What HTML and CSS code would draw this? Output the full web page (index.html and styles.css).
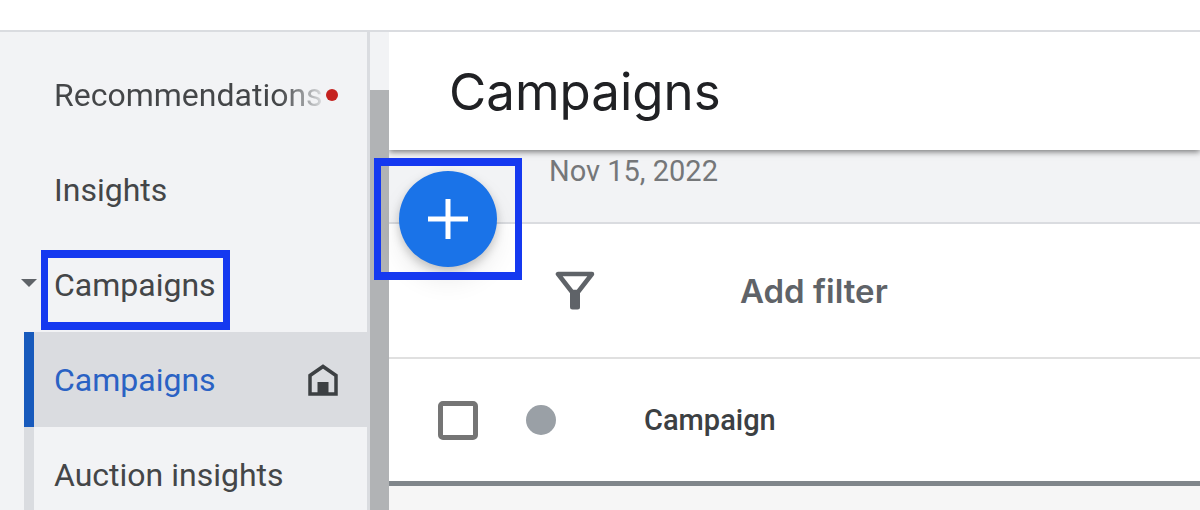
FILE: index.html
```
<!DOCTYPE html>
<html lang="en">
<head>
<meta charset="utf-8">
<title>Campaigns</title>
<link rel="stylesheet" href="styles.css">
</head>
<body>
<div class="topbar"></div>
<div class="layout">
  <nav class="sidebar" aria-label="Sections">
    <a class="item" href="#recommendations"><span class="fade">Recommendations</span><span class="alert"></span></a>
    <a class="item" href="#insights">Insights</a>
    <a class="item group" href="#campaigns-group">
      <svg class="caret" viewBox="0 0 16 8" aria-hidden="true"><path d="M0 0h16L8 8z"/></svg>
      Campaigns
      <span class="callout callout-nav"></span>
    </a>
    <a class="item sub active" href="#campaigns">Campaigns
      <svg class="home" viewBox="0 0 30 32" aria-hidden="true"><path d="M2 30V11.500L15 2.500L28 11.500V30z" fill="none" stroke="currentColor" stroke-width="3.500"/><path d="M9.500 18h11v13h-11z" fill="currentColor"/></svg>
    </a>
    <a class="item sub" href="#auction">Auction insights</a>
  </nav>
  <div class="scroll"><div class="thumb"></div></div>
  <main class="main">
    <header class="header"><h1 class="title">Campaigns</h1></header>
    <div class="dates">Nov 15, 2022</div>
    <div class="filters">
      <svg class="funnel" viewBox="0 0 40 40" aria-hidden="true"><path d="M3 3H37L23 21H17z" fill="none" stroke="currentColor" stroke-width="4.500" stroke-linejoin="round"/><path d="M15 19h10v17a2.500 2.500 0 0 1-2.500 2.500h-5A2.500 2.500 0 0 1 15 36z" fill="currentColor"/></svg>
      <button class="add-filter" type="button">Add filter</button>
    </div>
    <table class="table">
      <thead>
        <tr>
          <th class="check-cell"><input class="check" type="checkbox" aria-label="Select all campaigns"></th>
          <th class="dot-cell"><span class="dot"></span></th>
          <th class="name-cell" scope="col">Campaign</th>
        </tr>
      </thead>
    </table>
    <button class="fab" type="button" aria-label="New campaign">
      <svg class="plus" viewBox="0 0 40 40" aria-hidden="true"><path d="M20 0v40M0 20h40" stroke="currentColor" stroke-width="5"/></svg>
    </button>
    <span class="callout callout-fab"></span>
  </main>
</div>
</body>
</html>
```
FILE: styles.css
```
* {
  box-sizing: border-box;
}
body {
  margin: 0;
  height: 100vh;
  overflow: hidden;
  display: flex;
  flex-direction: column;
  background: #fff;
  color: #444648;
  font-family: Roboto, sans-serif;
}
.topbar {
  flex: none;
  height: 32px;
  border-bottom: 2px solid #dadce0;
}
.layout {
  flex: 1;
  min-height: 0;
  display: flex;
}
.sidebar {
  flex: none;
  width: 370px;
  padding-top: 15px;
  background: #f2f3f5;
  border-right: 3px solid #dadce0;
}
.item {
  position: relative;
  display: flex;
  align-items: center;
  height: 95px;
  padding-left: 54px;
  font-size: 32px;
  color: inherit;
  text-decoration: none;
}
.fade {
  background: linear-gradient(90deg, #444648 84%, #dcdee0 100%);
  background-clip: text;
  -webkit-background-clip: text;
  color: transparent;
}
.alert {
  position: absolute;
  right: 29px;
  width: 12px;
  height: 12px;
  border-radius: 50%;
  background: #c5221f;
}
.caret {
  position: absolute;
  left: 21px;
  top: 42px;
  width: 16px;
  height: 8px;
  fill: #5f6368;
}
.sub {
  margin-left: 24px;
  padding-left: 20px;
  border-left: 10px solid #dadce0;
}
.active {
  justify-content: space-between;
  padding-right: 29px;
  border-left-color: #185abc;
  background: #dadce0;
  color: #2a62c4;
}
.home {
  width: 30px;
  height: 32px;
  color: #3c4043;
}
.scroll {
  flex: none;
  width: 19px;
  padding-top: 58px;
  background: #f2f3f5;
}
.thumb {
  height: 100%;
  background: #b1b3b5;
}
.main {
  position: relative;
  flex: 1;
  min-width: 0;
  background: #f6f6f6;
}
.header {
  position: relative;
  display: flex;
  align-items: center;
  height: 118px;
  padding-left: 60px;
  background: #fff;
  box-shadow: 0 2px 6px rgba(0, 0, 0, 0.5);
  clip-path: inset(0 0 -12px 0);
}
.title {
  margin: 0;
  font-family: Inter, sans-serif;
  font-size: 51px;
  font-weight: 400;
  color: #202124;
}
.dates {
  height: 74px;
  padding: 4px 0 0 160px;
  border-bottom: 2px solid #dadce0;
  background: #f2f3f5;
  color: #757779;
  font-size: 29px;
  line-height: 34px;
}
.filters {
  display: flex;
  align-items: center;
  gap: 145px;
  height: 135px;
  padding-left: 166px;
  border-bottom: 2px solid #e0e0e0;
  background: #fff;
  color: #5f6368;
}
.funnel {
  width: 40px;
  height: 40px;
}
.add-filter {
  padding: 0;
  border: 0;
  background: none;
  color: inherit;
  font-family: Inter, sans-serif;
  font-size: 33px;
  font-weight: 600;
}
.table {
  width: 100%;
  border-collapse: separate;
  border-spacing: 0;
  table-layout: fixed;
  background: #fff;
  border-bottom: 5px solid #80868b;
}
.table th {
  height: 122px;
  padding: 0;
  text-align: left;
  vertical-align: middle;
}
.check-cell {
  width: 137px;
}
.dot-cell {
  width: 118px;
}
.table .check-cell {
  padding-left: 49px;
}
.check {
  display: block;
  width: 40px;
  height: 39px;
  margin: 0;
  appearance: none;
  border: 5px solid #757575;
  border-radius: 5px;
}
.dot {
  display: block;
  width: 30px;
  height: 30px;
  border-radius: 50%;
  background: #9aa0a6;
}
.name-cell {
  font-size: 29px;
  font-weight: 500;
  color: #3c4043;
}
.fab {
  position: absolute;
  left: 10px;
  top: 139px;
  display: flex;
  align-items: center;
  justify-content: center;
  width: 98px;
  height: 96px;
  padding: 0;
  border: 0;
  border-radius: 50%;
  background: #1a73e8;
  color: #fff;
  box-shadow: 0 4px 10px rgba(0, 0, 0, 0.2), 0 14px 26px rgba(0, 0, 0, 0.08);
}
.plus {
  width: 40px;
  height: 40px;
}
.callout {
  position: absolute;
  border: solid #1539f0;
  border-width: 8px 7px;
  pointer-events: none;
}
.callout-nav {
  left: 41px;
  top: 13px;
  width: 189px;
  height: 80px;
}
.callout-fab {
  left: -15px;
  top: 126px;
  width: 148px;
  height: 122px;
}
```
